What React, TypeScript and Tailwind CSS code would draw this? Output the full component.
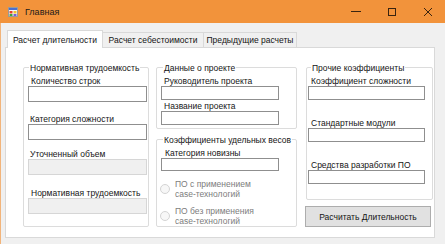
import React from "react";

function Label({ children, className = "" }: { children: React.ReactNode; className?: string }) {
  return <div className={`leading-[10px] h-[10px] whitespace-nowrap ${className}`}>{children}</div>;
}

function Input({ className = "" }: { className?: string }) {
  return <div className={`bg-white border border-[#8f8f8f] ${className}`} />;
}

function Disabled({ className = "" }: { className?: string }) {
  return <div className={`bg-[#f0f0f0] border border-[#d6d6d6] ${className}`} />;
}

function Group({ title, className = "", children }: { title: string; className?: string; children?: React.ReactNode }) {
  return (
    <div className={`border border-[#dcdcdc] rounded-[2px] flex flex-col ${className}`}>
      <div className="-mt-[5px] leading-[10px] h-[10px] w-fit bg-white px-[1px] whitespace-nowrap">{title}</div>
      {children}
    </div>
  );
}

function Radio({ l1, l2, className = "" }: { l1: string; l2: string; className?: string }) {
  return (
    <div className={`flex items-center ${className}`}>
      <div className="w-[10px] h-[10px] rounded-full border border-[#d4d4d4] bg-[#f7f7f7]" />
      <div className="ml-[5px] text-[#7d7d7d] leading-[10px]">
        <div>{l1}</div>
        <div>{l2}</div>
      </div>
    </div>
  );
}

export default function App() {
  return (
    <div className="w-[445px] h-[244px] bg-[#f0f0f0] flex flex-col overflow-hidden text-[8.5px] text-[#151515] font-['Liberation_Sans',Arial,sans-serif]">
      {/* Title bar */}
      <div className="h-[23px] bg-[#f2933b] flex items-center shrink-0">
        <svg width="10" height="10" viewBox="0 0 10 10" className="ml-[8px]">
          <rect x="0.5" y="0.5" width="9" height="9" fill="#f6f6f6" stroke="#9a9a9a" />
          <rect x="1" y="1" width="8" height="2" fill="#4a6fd0" />
          <rect x="1.5" y="4" width="3" height="2.5" fill="#e5402a" />
          <rect x="5.5" y="4" width="3" height="2.5" fill="#f2c12e" />
          <rect x="1.5" y="7" width="3" height="2" fill="#3ca33c" />
          <rect x="5.5" y="7" width="3" height="2" fill="#7a5cd6" />
        </svg>
        <div className="ml-[7px] text-[9px] leading-[12px] text-[#1a1a1a]">Главная</div>
        <div className="flex-1" />
        <div className="w-[36px] h-[23px] flex items-center justify-center">
          <div className="w-[10px] h-[1px] bg-[#3a2410]" />
        </div>
        <div className="w-[36px] h-[23px] flex items-center justify-center">
          <div className="w-[8px] h-[8px] border border-[#3a2410]" />
        </div>
        <div className="w-[36px] h-[23px] flex items-center justify-center mr-[-1px]">
          <svg width="10" height="10" viewBox="0 0 10 10">
            <path d="M1 1 L9 9 M9 1 L1 9" stroke="#3a2410" strokeWidth="1" />
          </svg>
        </div>
      </div>

      {/* Body */}
      <div className="flex-1 border-l border-[#f2b47a] pl-[4px] pt-[7px] flex flex-col">
        {/* Tabs */}
        <div className="flex items-end h-[17px] pl-[2px] shrink-0">
          <div className="relative z-10 h-[18px] -mb-[1px] w-[96px] bg-white border border-b-0 border-[#d9d9d9] flex items-center justify-center leading-[10px] whitespace-nowrap">
            Расчет длительности
          </div>
          <div className="h-[15px] w-[101px] bg-[#f0f0f0] border border-l-0 border-b-0 border-[#d9d9d9] flex items-center justify-center leading-[10px] whitespace-nowrap">
            Расчет себестоимости
          </div>
          <div className="h-[15px] w-[93px] bg-[#f0f0f0] border border-l-0 border-b-0 border-[#d9d9d9] flex items-center justify-center leading-[10px] whitespace-nowrap">
            Предыдущие расчеты
          </div>
        </div>

        {/* Page */}
        <div className="w-[430px] h-[191px] bg-white border border-[#d9d9d9] pl-[17px] pt-[19px] flex">
          {/* Column 1 */}
          <Group title="Нормативная трудоемкость" className="w-[126px] h-[160px] pl-[4px] [&>div:first-child]:ml-[1px]">
            <Label className="mt-[3px] ml-[3px]">Количество строк</Label>
            <Input className="w-[119px] h-[16px]" />
            <Label className="mt-[12px] ml-[2px]">Категория сложности</Label>
            <Input className="w-[119px] h-[16px]" />
            <Label className="mt-[9px] ml-[2px]">Уточненный объем</Label>
            <Disabled className="w-[119px] h-[16px]" />
            <Label className="mt-[13px] ml-[3px]">Нормативная трудоемкость</Label>
            <Disabled className="w-[119px] h-[16px]" />
          </Group>

          {/* Column 2 */}
          <div className="ml-[7px] flex flex-col w-[141px]">
            <Group title="Данные о проекте" className="h-[62px] pl-[4px] [&>div:first-child]:ml-[2px]">
              <Label className="mt-[3px] ml-[3px]">Руководитель проекта</Label>
              <Input className="w-[118px] h-[14px]" />
              <Label className="mt-[1px] ml-[3px]">Название проекта</Label>
              <Input className="w-[118px] h-[14px]" />
            </Group>
            <Group title="Коэффициенты удельных весов" className="mt-[10px] h-[88px] pl-[4px] [&>div:first-child]:ml-[2px]">
              <Label className="mt-[3px] ml-[4px]">Категория новизны</Label>
              <Input className="w-[118px] h-[14px]" />
              <Radio className="mt-[8px] ml-[-1px]" l1="ПО с применением" l2="case-технологий" />
              <Radio className="mt-[7px] ml-[-1px]" l1="ПО без применения" l2="case-технологий" />
            </Group>
          </div>

          {/* Column 3 */}
          <div className="ml-[9px] flex flex-col w-[127px]">
            <Group title="Прочие коэффициенты" className="h-[133px] pl-[1px] [&>div:first-child]:ml-[3px]">
              <Label className="mt-[3px] ml-[3px]">Коэффициент сложности</Label>
              <Input className="w-[117px] h-[14px]" />
              <Label className="mt-[18px] ml-[3px]">Стандартные модули</Label>
              <Input className="w-[117px] h-[14px]" />
              <Label className="mt-[18px] ml-[3px]">Средства разработки ПО</Label>
              <Input className="w-[117px] h-[14px]" />
            </Group>
            <div className="mt-[6px] -ml-[1px] w-[126px] h-[21px] bg-[#e1e1e1] border border-[#adadad] flex items-center justify-center leading-[10px] whitespace-nowrap">
              Расчитать&nbsp;<span className="underline">Д</span>лительность
            </div>
          </div>
        </div>
      </div>
    </div>
  );
}
